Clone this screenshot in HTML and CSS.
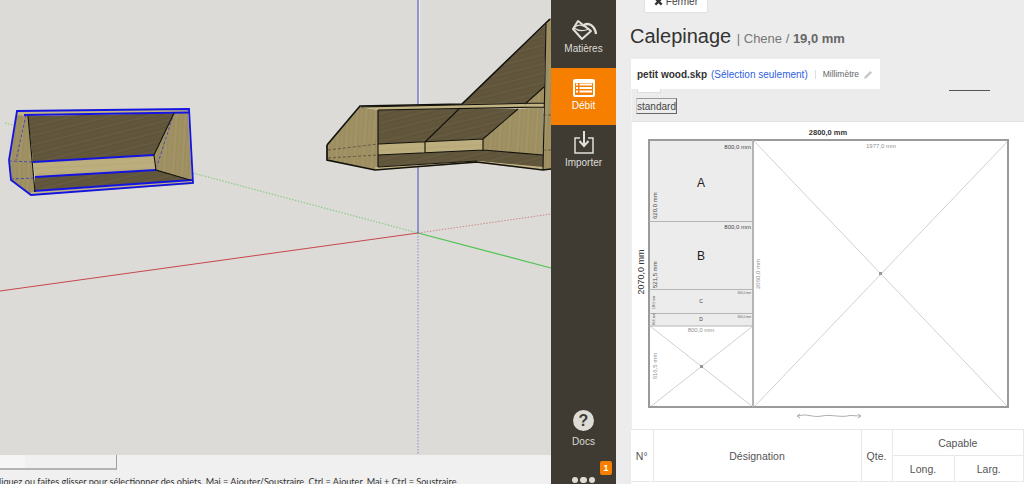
FILE: index.html
```html
<!DOCTYPE html>
<html lang="fr">
<head>
    <meta charset="UTF-8">
    <title>Calepinage</title>
    <link rel="stylesheet" href="styles.css">
</head>
<body>
<div class="app">
    <div class="modeler">
        <div class="scene">
            <svg class="scene-svg" viewBox="0 0 551 455" width="551" height="455">
                <defs>
                    <pattern id="wood-dark" width="16" height="9" patternUnits="userSpaceOnUse" patternTransform="rotate(-14)">
                        <rect width="16" height="9" fill="#62573c"/>
                        <path d="M0,2 H16 M0,6.500 C5,5.500 10,7.500 16,6.500" stroke="#5c5238" stroke-width="1" fill="none"/>
                        <path d="M0,4.300 H16" stroke="#685d42" stroke-width="1"/>
                    </pattern>
                    <pattern id="wood-light" width="9" height="16" patternUnits="userSpaceOnUse" patternTransform="rotate(4)">
                        <rect width="9" height="16" fill="#a09163"/>
                        <path d="M2,0 V16 M6.500,0 C5.500,5 7.500,10 6.500,16" stroke="#998b5e" stroke-width="1" fill="none"/>
                        <path d="M4.300,0 V16" stroke="#a5976a" stroke-width="1"/>
                    </pattern>
                    <pattern id="wood-strip" width="18" height="6" patternUnits="userSpaceOnUse" patternTransform="rotate(-3)">
                        <rect width="18" height="6" fill="#bdae7e"/>
                        <path d="M0,2 H18" stroke="#b5a677" stroke-width="1"/>
                    </pattern>
                </defs>

                <!-- axes -->
                <line x1="5" y1="123" x2="418" y2="233" class="axis-green dotted"/>
                <line x1="418" y1="233" x2="551" y2="214" class="axis-red dotted"/>
                <line x1="418" y1="233" x2="418" y2="455" class="axis-blue dotted"/>
                <line x1="0" y1="291" x2="418" y2="233" class="axis-red"/>
                <line x1="418" y1="233" x2="551" y2="268" class="axis-green"/>
                <line x1="418" y1="0" x2="418" y2="233" class="axis-blue"/>
                <line x1="419.500" y1="0" x2="419.500" y2="105" class="axis-glow"/>

                <!-- selected shelf -->
                <g class="shelf-selected">
                    <polygon fill="url(#wood-light)" points="17,112 28,116 35,192 31,195 11,180 9,160"/>
                    <polygon fill="url(#wood-light)" points="174,113 188,111 192,181 156,171 154,155"/>
                    <polygon fill="url(#wood-dark)" points="28,116 174,113 154,155 33,162"/>
                    <polygon fill="url(#wood-strip)" points="33,162 154,155 156,170 35,177"/>
                    <polygon fill="url(#wood-dark)" points="35,177 156,170 190,180 35,191"/>
                    <polygon class="wood-edge" points="17,111 189,109 189,113 28,116 17,115"/>
                    <polygon class="wood-edge" points="31,192 193,180 193,184 31,195"/>
                    <path class="sel-line" d="M17,111 L189,109 L193,183 L31,195 L11,180 L9,160 Z"/>
                    <path class="sel-line" d="M24,115 L189,112.500 M33,162 L154,155 M35,177 L156,170 M34,191 L192,180"/>
                    <path class="sel-dash" d="M9,161 L33,162 M11,179 L35,178 M26,115 L16,160 M174,113 L157,166"/>
                    <path class="black-line" d="M28,116 L35,192 M174,113 L154,155 L156,170 L190,180"/>
                </g>

                <!-- second shelf -->
                <g class="shelf-main">
                    <polygon fill="url(#wood-dark)" points="462,104 546,24 544,87 525,104"/>
                    <polygon fill="url(#wood-light)" points="525,104 544,87 544,104"/>
                    <polygon fill="url(#wood-light)" points="327,145 360,107 378,110 378,167 375,170 327,160"/>
                    <polygon fill="url(#wood-dark)" points="378,110 460,108 425,142 378,144"/>
                    <polygon fill="url(#wood-dark)" points="460,108 518,109 483,139 425,142"/>
                    <polygon fill="url(#wood-strip)" points="378,144 483,139 483,150 378,155"/>
                    <polygon fill="url(#wood-light)" points="518,109 543,107 543,155 483,150 483,139"/>
                    <polygon fill="url(#wood-dark)" points="378,155 483,150 543,155 543,168 477,161 378,167"/>
                    <polygon class="wood-edge" points="360,106 462,104 544,103 544,108 378,110"/>
                    <polygon class="wood-edge" points="375,167 477,161 477,163 375,170"/>
                    <polygon class="wood-edge" points="477,161 543,167 551,167 551,170 543,170 477,163"/>
                    <polygon fill="url(#wood-light)" points="546,22 551,18 551,170 543,170"/>
                    <path class="black-line thick" d="M327,145 L360,106 L462,104 L550,19 M327,145 L327,160 L375,170 L477,162 L543,170 L551,169"/>
                    <path class="black-line" d="M378,110 L378,167 M361,107 L544,103 M378,110 L544,107 M460,108 L425,142 M518,109 L483,139 M378,144 L483,139 L483,150 L378,155 M425,142 L425,153 M483,150 L543,155 M378,167 L477,161 M544,87 L525,104 M546,24 L543,170"/>
                    <path class="dash-line" d="M328,150 L378,144 M328,158 L378,155 M543,115 L551,115 M543,150 L551,150"/>
                </g>
            </svg>
        </div>
        <div class="statusbar">
            <div class="status-tabs"><span class="status-tab-left"></span></div>
            <p class="status-text">Cliquez ou faites glisser pour sélectionner des objets. Maj = Ajouter/Soustraire, Ctrl = Ajouter, Maj + Ctrl = Soustraire.</p>
        </div>
    </div>

    <nav class="sidebar">
        <a class="side-item side-first">
            <svg viewBox="0 0 30 24" width="30" height="24" class="side-icon">
                <path d="M4,11 L9,3 L22,13 L13,21 Z" fill="none" stroke="#e2e0da" stroke-width="2" stroke-linejoin="round"/>
                <path d="M5,10 C8,6 14,7 20,11 C15,13 9,13 5,10 Z" fill="none" stroke="#e2e0da" stroke-width="1.200"/>
                <path d="M15,7 C20,4 26,8 27,16" fill="none" stroke="#e2e0da" stroke-width="2.400"/>
            </svg>
            <span>Matières</span>
        </a>
        <a class="side-item side-active">
            <svg viewBox="0 0 22 18" width="22" height="18" class="side-icon">
                <rect x="0" y="0" width="22" height="18" rx="2" fill="#fff"/>
                <rect x="2" y="4" width="18" height="12" fill="#f77f00"/>
                <path d="M3,5.500 H5 M6.500,5.500 H19 M3,9 H5 M6.500,9 H19 M3,12.500 H5 M6.500,12.500 H19" stroke="#fff" stroke-width="1.800"/>
            </svg>
            <span>Débit</span>
        </a>
        <a class="side-item side-import">
            <svg viewBox="0 0 20 23" width="20" height="23" class="side-icon">
                <path d="M6,7 H1 V22 H19 V7 H14" fill="none" stroke="#e2e0da" stroke-width="1.500"/>
                <path d="M10,0 V14 M5.500,10 L10,15 L14.500,10" fill="none" stroke="#e2e0da" stroke-width="2"/>
            </svg>
            <span>Importer</span>
        </a>
        <a class="side-item side-docs">
            <span class="docs-icon">?</span>
            <span>Docs</span>
        </a>
        <div class="side-more">
            <span class="more-badge">1</span>
            <i></i><i></i><i></i>
        </div>
    </nav>

    <main class="panel">
        <button class="close-btn">
            <svg viewBox="0 0 10 10" width="9" height="9" class="close-x"><path d="M1.500,1.500 L8.500,8.500 M8.500,1.500 L1.500,8.500" stroke="#333" stroke-width="2.600"/></svg>
            Fermer
        </button>
        <h1 class="title">Calepinage <small>| Chene / <b>19,0 mm</b></small></h1>
        <div class="tabs">
            <div class="tab">
                <b>petit wood.skp</b>
                <span class="tab-link">(Sélection seulement)</span>
                <span class="tab-sep"></span>
                <span class="tab-unit">Millimètre</span>
                <svg viewBox="0 0 10 10" width="9" height="9"><path d="M0,10 L1,7 L7,1 L9,3 L3,9 Z" fill="#c8c8c8"/></svg>
            </div>
        </div>
        <div class="content">
            <div class="options">
                <span class="chip"></span>
                <span class="ghost-btn"></span>
                <button class="standard-btn">standard</button>
            </div>
            <div class="sheet-wrap">
                <svg class="sheet" viewBox="631 122 393 307" width="393" height="307">
                    <text x="828" y="135" class="dim-main" text-anchor="middle">2800,0 mm</text>
                    <text transform="translate(644,272) rotate(-90)" class="dim-side" text-anchor="middle">2070,0 mm</text>

                    <rect x="649" y="141" width="104" height="80" class="part"/>
                    <rect x="649" y="222" width="104" height="67" class="part"/>
                    <rect x="649" y="290" width="104" height="23" class="part"/>
                    <rect x="649" y="314" width="104" height="12" class="part"/>

                    <path d="M650,407 L753,326 M650,326 L753,407 M754,141 L1008,407 M1008,141 L754,407" class="waste-line"/>
                    <rect x="700" y="365" width="3" height="3" class="waste-dot"/>
                    <rect x="879" y="272" width="3" height="3" class="waste-dot"/>

                    <path d="M649,140 H1008 V407 H649 Z" class="sheet-border"/>
                    <path d="M753,140 V407" class="cut-thick"/>
                    <path d="M649,221.500 H753 M649,289.500 H753 M649,313.500 H753 M649,326 H753" class="cut"/>

                    <text x="701" y="187" class="part-name">A</text>
                    <text x="701" y="260" class="part-name">B</text>
                    <text x="701" y="303" class="part-name tiny">C</text>
                    <text x="701" y="321" class="part-name tiny">D</text>

                    <text x="751" y="149" class="dim" text-anchor="end">800,0 mm</text>
                    <text x="751" y="229" class="dim" text-anchor="end">800,0 mm</text>
                    <text x="751" y="294" class="dim-tiny" text-anchor="end">800,0 mm</text>
                    <text x="751" y="318" class="dim-tiny" text-anchor="end">800,0 mm</text>
                    <text transform="translate(657,219) rotate(-90)" class="dim">620,0 mm</text>
                    <text transform="translate(657,288) rotate(-90)" class="dim">521,5 mm</text>
                    <text transform="translate(655,309) rotate(-90)" class="dim-tiny">180,0 mm</text>
                    <text transform="translate(655,325) rotate(-90)" class="dim-tiny">80,0 mm</text>

                    <text x="881" y="148" class="dim-waste" text-anchor="middle">1977,0 mm</text>
                    <text transform="translate(760,274) rotate(-90)" class="dim-waste" text-anchor="middle">2060,0 mm</text>
                    <text x="701" y="332" class="dim-waste" text-anchor="middle">800,0 mm</text>
                    <text transform="translate(657,366) rotate(-90)" class="dim-waste" text-anchor="middle">616,5 mm</text>

                    <path d="M798,416 C808,413 812,418 822,416 C832,414 840,418 850,415.500 L860,416" class="grain"/>
                    <path d="M800,414 L797,416 L800,418 M858,414 L861,416 L858,418" class="grain"/>
                </svg>
            </div>
            <table class="parts">
                <colgroup>
                    <col class="col-num"><col class="col-name"><col class="col-qty"><col class="col-long"><col>
                </colgroup>
                <thead>
                    <tr>
                        <th rowspan="2">N°</th>
                        <th rowspan="2">Désignation</th>
                        <th rowspan="2">Qte.</th>
                        <th colspan="2">Capable</th>
                    </tr>
                    <tr>
                        <th>Long.</th>
                        <th>Larg.</th>
                    </tr>
                </thead>
            </table>
        </div>
    </main>
</div>
</body>
</html>
```
FILE: styles.css
```css
* {
    box-sizing: border-box;
}
html, body {
    margin: 0;
    height: 100%;
    overflow: hidden;
}
body {
    font-family: 'Liberation Sans', Arial, sans-serif;
    color: #444;
}
.app {
    display: flex;
    width: 1024px;
    height: 484px;
    overflow: hidden;
}

/* modeler */
.modeler {
    width: 551px;
    flex: none;
    display: flex;
    flex-direction: column;
    background-color: #f0f0f0;
}
.scene {
    height: 455px;
    flex: none;
    background-color: #dcdbd8;
}
.scene-svg {
    display: block;
}
.axis-red, .axis-green, .axis-blue {
    stroke-width: 1;
}
.axis-red { stroke: #c8474c; }
.axis-green { stroke: #4cc24c; stroke-width: 1.200; }
.axis-blue { stroke: #4a4ac4; }
.axis-glow { stroke: #eeeeec; }
.dotted {
    stroke-dasharray: 1.500 1.500;
    opacity: 0.55;
}
.wood-edge { fill: #c2b384; }
.sel-line {
    fill: none;
    stroke: #1414e0;
    stroke-width: 1.800;
}
.sel-dash {
    fill: none;
    stroke: #3636cc;
    stroke-width: 0.800;
    stroke-dasharray: 3 2;
}
.black-line {
    fill: none;
    stroke: #12110c;
    stroke-width: 1.100;
}
.black-line.thick {
    stroke-width: 1.700;
}
.dash-line {
    fill: none;
    stroke: #4a4434;
    stroke-width: 0.700;
    stroke-dasharray: 3 2;
}
.statusbar {
    flex: 1;
    position: relative;
    overflow: hidden;
}
.status-tabs {
    width: 117px;
    height: 15px;
    background-color: #f0f0f0;
    border-right: 1px solid #a0a0a0;
    border-bottom: 2px solid #b4b4b4;
}
.status-tab-left {
    display: block;
    width: 25px;
    height: 13px;
    background-color: #f5f5f5;
}
.status-text {
    margin: 5px 0 0 -7px;
    font-family: 'Lato', sans-serif;
    font-size: 9.100px;
    line-height: 13px;
    color: #333;
    white-space: nowrap;
}

/* sidebar */
.sidebar {
    width: 65px;
    flex: none;
    display: flex;
    flex-direction: column;
    background-color: #3f3b33;
    color: #dedcd6;
    font-size: 10px;
}
.side-item {
    height: 57px;
    display: flex;
    flex-direction: column;
    align-items: center;
    justify-content: center;
    gap: 3px;
}
.side-first {
    height: 68px;
    padding-top: 18px;
    justify-content: flex-start;
    gap: 1px;
}
.side-active {
    background-color: #f77f00;
    color: #fff;
    padding-bottom: 4px;
}
.side-import {
    padding-bottom: 9px;
}
.side-icon {
    display: block;
}
.side-docs {
    margin-top: auto;
    height: auto;
    gap: 5px;
}
.docs-icon {
    width: 21px;
    height: 21px;
    border-radius: 50%;
    background-color: #dedcd6;
    color: #3f3b33;
    font-size: 16px;
    font-weight: bold;
    line-height: 21px;
    text-align: center;
}
.side-more {
    position: relative;
    display: flex;
    justify-content: center;
    gap: 2px;
    padding: 30px 0 1px;
}
.side-more i {
    width: 6.500px;
    height: 6.500px;
    border-radius: 50%;
    background-color: #dedcd6;
}
.more-badge {
    position: absolute;
    right: 4px;
    top: 14px;
    width: 12px;
    height: 14px;
    border-radius: 2px;
    background-color: #f77f00;
    color: #fff;
    font-size: 9px;
    font-weight: bold;
    line-height: 14px;
    text-align: center;
}

/* panel */
.panel {
    flex: 1;
    min-width: 0;
    display: flex;
    flex-direction: column;
    align-items: flex-start;
    background-color: #ececec;
}
.close-btn {
    height: 25px;
    width: 64px;
    margin: -12px 0 0 28px;
    flex: none;
    padding: 2px 0 0;
    border: 1px solid #e2e2e2;
    border-radius: 2px;
    background-color: #fff;
    font-family: inherit;
    font-size: 10px;
    color: #444;
}
.close-x {
    vertical-align: -1px;
}
.title {
    height: 22px;
    margin: 12px 0 0 14px;
    font-size: 20px;
    font-weight: normal;
    line-height: 22px;
    color: #333;
    white-space: nowrap;
}
.title small {
    font-size: 13px;
    color: #777;
}
.title b {
    color: #666;
}
.tabs {
    margin: 12px 0 0 15px;
    flex: none;
}
.tab {
    width: 249px;
    height: 30px;
    padding-left: 6px;
    display: flex;
    align-items: center;
    background-color: #fff;
    font-size: 10px;
    color: #333;
    white-space: nowrap;
}
.tab-link {
    margin-left: 4px;
    color: #2f5fe0;
}
.tab-sep {
    width: 1px;
    height: 9px;
    margin: 0 7px 0 7px;
    background-color: #ddd;
}
.tab-unit {
    font-size: 8.500px;
    color: #666;
    margin-right: 5px;
}
.content {
    margin-left: 15px;
    width: 393px;
    flex: 1;
    min-height: 0;
    display: flex;
    flex-direction: column;
    background-color: #fff;
}
.options {
    position: relative;
    height: 33px;
    flex: none;
    padding: 9px 0 0 4px;
    background-color: #ececec;
    border-bottom: 1px solid #e2e2e2;
    border-left: 1px solid #f2f2f2;
}
.chip {
    position: absolute;
    left: 5px;
    top: 0;
    width: 24px;
    height: 4px;
    background-color: #fff;
    border: 1px solid #ddd;
    border-top: none;
}
.ghost-btn {
    position: absolute;
    left: 317px;
    top: 0;
    width: 41px;
    height: 2px;
    border-bottom: 1px solid #555;
}
.standard-btn {
    display: block;
    width: 41px;
    height: 16px;
    padding: 0;
    background-color: #ececec;
    border: 1px solid #666;
    border-left-color: #ccc;
    border-top-color: #999;
    font-family: inherit;
    font-size: 10px;
    color: #444;
}
.sheet-wrap {
    height: 307px;
    flex: none;
    border-left: 1px solid #eee;
}
.sheet {
    display: block;
    margin-left: -1px;
}
.part {
    fill: #ececec;
}
.sheet-border {
    fill: none;
    stroke: #9a9a9a;
    stroke-width: 2;
}
.cut-thick {
    fill: none;
    stroke: #b4b4b4;
    stroke-width: 2;
}
.cut {
    fill: none;
    stroke: #b4b4b4;
    stroke-width: 1.200;
}
.waste-line {
    fill: none;
    stroke: #d0d0d0;
    stroke-width: 1;
}
.waste-dot {
    fill: #999;
}
.grain {
    fill: none;
    stroke: #999;
    stroke-width: 0.800;
}
.dim-main {
    font-size: 7.500px;
    fill: #333;
    font-weight: bold;
}
.dim-side {
    font-size: 9px;
    fill: #333;
}
.dim {
    font-size: 6px;
    fill: #444;
}
.dim-tiny {
    font-size: 3px;
    fill: #666;
}
.dim-waste {
    font-size: 6px;
    fill: #8f8f8f;
}
.part-name {
    font-size: 12px;
    fill: #222;
    text-anchor: middle;
}
.part-name.tiny {
    font-size: 5px;
    fill: #444;
}
.parts {
    width: 393px;
    table-layout: fixed;
    border-collapse: collapse;
    font-size: 10.500px;
    color: #555;
}
.parts th {
    height: 26px;
    padding: 0;
    font-weight: normal;
    border: 1px solid #e8e8e8;
}
.parts th:first-child {
    border-left: none;
}
.col-num { width: 22px; }
.col-name { width: 208px; }
.col-qty { width: 31px; }
.col-long { width: 62px; }
```
